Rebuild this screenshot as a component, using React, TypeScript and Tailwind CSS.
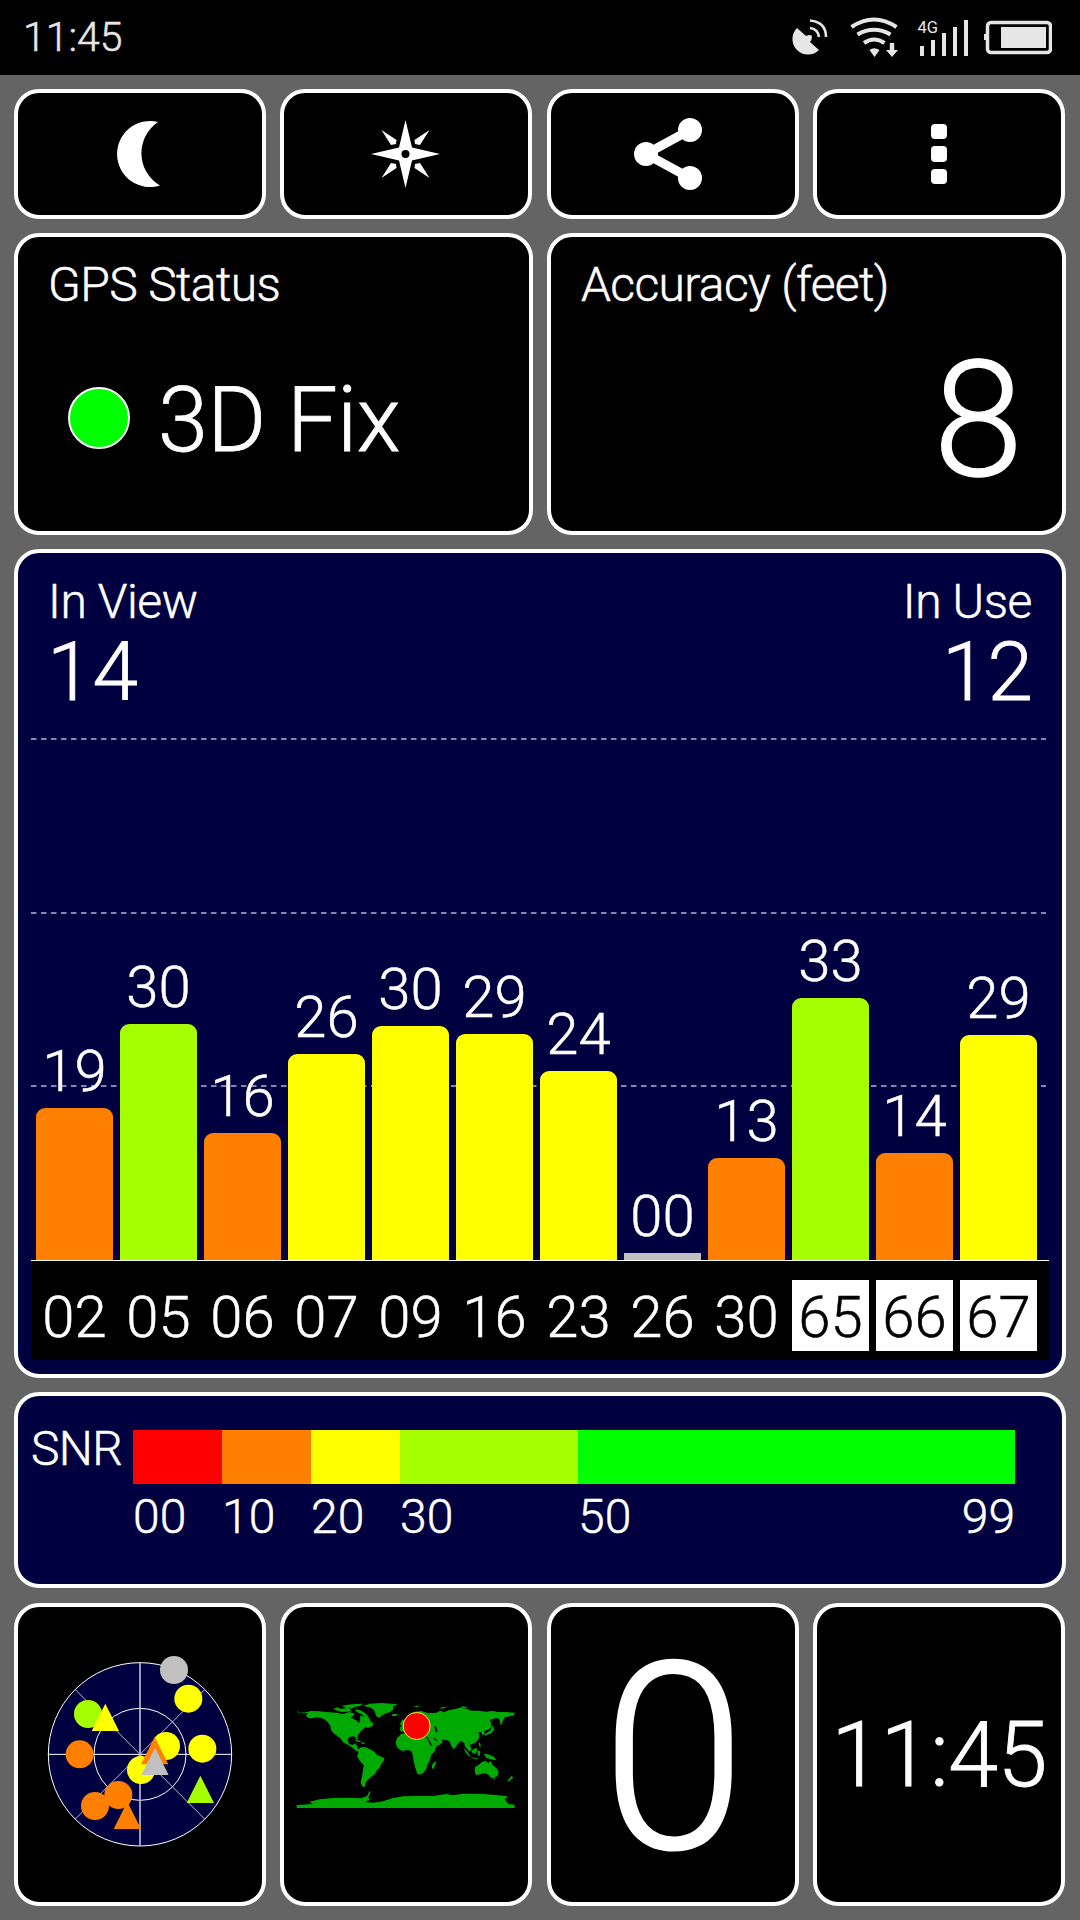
import { ReactNode } from 'react'

type Satellite = { id: string; snr: string; height: number; color: string; glonass?: boolean }

const SATELLITES: Satellite[] = [
  { id: '02', snr: '19', height: 152, color: '#ff8000' },
  { id: '05', snr: '30', height: 236, color: '#a6ff00' },
  { id: '06', snr: '16', height: 127, color: '#ff8000' },
  { id: '07', snr: '26', height: 206, color: '#ffff00' },
  { id: '09', snr: '30', height: 234, color: '#ffff00' },
  { id: '16', snr: '29', height: 226, color: '#ffff00' },
  { id: '23', snr: '24', height: 189, color: '#ffff00' },
  { id: '26', snr: '00', height: 7, color: '#c0c0c0' },
  { id: '30', snr: '13', height: 102, color: '#ff8000' },
  { id: '65', snr: '33', height: 262, color: '#a6ff00', glonass: true },
  { id: '66', snr: '14', height: 107, color: '#ff8000', glonass: true },
  { id: '67', snr: '29', height: 225, color: '#ffff00', glonass: true },
]

const SNR_STEPS = [
  { label: '00', className: 'w-[89px] bg-[#ff0000]', labelClass: 'w-[89px]' },
  { label: '10', className: 'w-[89px] bg-[#ff8000]', labelClass: 'w-[89px]' },
  { label: '20', className: 'w-[89px] bg-[#ffff00]', labelClass: 'w-[89px]' },
  { label: '30', className: 'w-[178px] bg-[#a6ff00]', labelClass: 'w-[178px]' },
  { label: '50', className: 'flex-1 bg-[#00ff00]', labelClass: 'flex-1' },
]

function Card({ className = '', children }: { className?: string; children: ReactNode }) {
  return (
    <div className={`rounded-[25px] border-4 border-white ${className}`}>
      {children}
    </div>
  )
}

function StatusBar() {
  return (
    <header className="flex h-[75px] items-center justify-between bg-black pl-[23px] pr-7 text-[#e6e6e6]">
      <span className="text-[41px] leading-none">11:45</span>
      <svg width="262" height="44" viewBox="790 16 262 44" fill="none">
        {/* 위성 안테나 */}
        <path d="M797 28 L806 36 Q810 34 812 36 Q812 40 810 42 L819 50 A15.5 15.5 0 0 1 797 28Z" fill="#e6e6e6" />
        <path d="M810 28 Q818 29 819 37 M810 20.5 Q826 22 826 37" stroke="#e6e6e6" strokeWidth="2.6" />
        {/* 와이파이 */}
        <path d="M851.500 27 Q874 12 896.500 27 M857.500 34.500 Q874 25 890.500 34.500 M864 43 Q874 36 884.500 43" stroke="#e6e6e6" strokeWidth="4" />
        <path d="M869.500 50 Q874 46.500 879.500 50 L874.500 57Z" fill="#e6e6e6" />
        <path d="M889.800 43h4.400v7h3.800l-6 7l-6-7h3.800z" fill="#e6e6e6" />
        {/* 신호 세기 */}
        <text x="917.500" y="33" fontSize="16.500" fontWeight="400" fill="#e6e6e6">4G</text>
        <path d="M922 46v10M933 40v16M944 33v23M955 27v29M966 20v36" stroke="#e6e6e6" strokeWidth="4" />
        {/* 배터리 */}
        <rect x="987.500" y="22.500" width="63" height="30" rx="3.500" stroke="#e6e6e6" strokeWidth="3.500" />
        <rect x="1001" y="27" width="45" height="21" fill="#e6e6e6" />
        <path d="M987 34h-3v6h3z" fill="#e6e6e6" />
      </svg>
    </header>
  )
}

function Toolbar() {
  return (
    <div className="flex h-[130px] gap-[14.5px] pr-px">
      <Card className="flex flex-1 items-center justify-center bg-black">
        <svg width="80" height="80" viewBox="0 0 80 80" fill="white">
          <path d="M58 8 A33 33 0 1 0 60 71.500 A37.500 37.500 0 0 1 58 8Z" />
        </svg>
      </Card>
      <Card className="flex flex-1 items-center justify-center bg-black">
        <svg width="80" height="80" viewBox="0 0 80 80" fill="white">
          <path d="M39.500 6 L46 33.500 L74 40 L46 46.500 L39.500 74 L33 46.500 L5 40 L33 33.500Z" />
          <path d="M15.500 16 L30.500 26 L30 30 L25 31Z M63.500 16 L48.500 26 L49 30 L54 31Z M15.500 64 L30.500 54 L30 50 L25 49Z M63.500 64 L48.500 54 L49 50 L54 49Z" />
          <circle cx="39.500" cy="40" r="4" fill="black" />
        </svg>
      </Card>
      <Card className="flex flex-1 items-center justify-center bg-black">
        <svg width="80" height="80" viewBox="0 0 80 80" fill="white">
          <path d="M57 16 L13 40 L57 64" fill="none" stroke="white" strokeWidth="9" />
          <circle cx="57" cy="16" r="12" />
          <circle cx="13" cy="40" r="12" />
          <circle cx="57" cy="64" r="12" />
        </svg>
      </Card>
      <Card className="flex flex-1 flex-col items-center justify-center gap-[7px] bg-black">
        <div className="h-[15.500px] w-[15.500px] rounded bg-white" />
        <div className="h-[15.500px] w-[15.500px] rounded bg-white" />
        <div className="h-[15.500px] w-[15.500px] rounded bg-white" />
      </Card>
    </div>
  )
}

function SignalChart() {
  return (
    <Card className="flex h-[829px] flex-col bg-[#000040] px-[13px]">
      <div className="flex h-[147px] justify-between px-[17px] pt-[21px]">
        <div>
          <p className="text-5xl leading-[56px] tracking-[-0.4px]">In View</p>
          <p className="-ml-px text-[82px] leading-[84px] [-webkit-text-stroke-width:0.8px]">14</p>
        </div>
        <div className="text-right">
          <p className="text-5xl leading-[56px] tracking-[-0.4px]">In Use</p>
          <p className="-mr-px text-[82px] leading-[84px] [-webkit-text-stroke-width:0.8px]">12</p>
        </div>
      </div>
      <div className="relative h-[560px]">
        <svg className="absolute inset-0" width="1018" height="560" viewBox="0 0 1018 560">
          <path d="M0 39h1015M0 213h1015M0 386h1015" stroke="#8585b5" strokeWidth="2" strokeDasharray="5.500 4.500" />
        </svg>
        <div className="relative flex h-full items-end gap-[7px] pl-[5px]">
          {SATELLITES.map((s) => (
            <div key={s.id} className="w-[77px]">
              <p className="mb-px whitespace-nowrap text-center text-[58px] leading-[72px]">{s.snr}</p>
              <div
                className={s.height > 10 ? 'rounded-t-[9px]' : ''}
                style={{ height: s.height, backgroundColor: s.color }}
              />
            </div>
          ))}
        </div>
      </div>
      <div className="flex h-[100px] gap-[7px] border-t border-white bg-black pl-[5px] pt-[19px]">
        {SATELLITES.map((s) => (
          <div
            key={s.id}
            className={`h-[71px] w-[77px] text-center text-[58px] leading-[75px] ${s.glonass ? 'bg-white text-black' : ''}`}
          >
            {s.id}
          </div>
        ))}
      </div>
    </Card>
  )
}

function SnrLegend() {
  return (
    <Card className="flex h-[196px] bg-[#000040] pl-[13px] pt-[34px]">
      <div className="w-[102px] text-5xl leading-[38px] tracking-[-0.7px]">SNR</div>
      <div className="w-[882px]">
        <div className="flex h-[54px]">
          {SNR_STEPS.map((step) => (
            <div key={step.label} className={step.className} />
          ))}
        </div>
        <div className="flex text-5xl leading-[66px]">
          {SNR_STEPS.map((step) => (
            <span key={step.label} className={step.labelClass}>{step.label}</span>
          ))}
          <span>99</span>
        </div>
      </div>
    </Card>
  )
}

function Radar() {
  return (
    <svg width="220" height="230" viewBox="0 0 660 690" className="shrink-0">
      <circle cx="330" cy="343" r="275" fill="#000040" />
      <g fill="none" stroke="#ffffff" strokeWidth="3">
        <circle cx="330" cy="343" r="275" />
        <circle cx="330" cy="343" r="138" />
        <path d="M55 343h550" />
        <path d="M330 68v550" stroke="#b8b8dc" strokeWidth="5" />
        <path d="M136 149L524 537M524 149L136 537" stroke="#b8b8dc" />
      </g>
      <g fill="#c0c0c0"><circle cx="432" cy="90" r="42" /></g>
      <g fill="#a6ff00">
        <circle cx="174" cy="222" r="42" />
        <path d="M511 407l41 82h-82z" />
      </g>
      <g fill="#ffff00">
        <circle cx="475" cy="176" r="42" />
        <circle cx="517" cy="326" r="42" />
        <circle cx="408" cy="318" r="42" />
        <circle cx="333" cy="390" r="42" />
        <path d="M226 191l41 82h-82z" />
      </g>
      <g fill="#ff8000">
        <circle cx="149" cy="343" r="42" />
        <circle cx="195" cy="498" r="42" />
        <circle cx="265" cy="465" r="42" />
        <path d="M292 485l41 82h-82z" />
        <path d="M374 291l41 82h-82z" />
      </g>
      <path d="M375 323l41 82h-82z" fill="#c0c0c0" />
    </svg>
  )
}

function WorldMap() {
  return (
    <svg width="230" height="130" viewBox="4 0 690 390" className="shrink-0">
      <g fill="#00aa00">
        {/* 북미 */}
        <path d="M21 60L26 68L40 70L55 70L48 77L56 84L68 85L78 82L92 83L104 88L114 96L122 107L124 120L132 130L144 139L152 145L160 157L175 164L185 171L196 179L205 185L210 180L203 174L202 165L193 161L190 165L178 162L174 150L178 142L190 139L197 141L201 149L205 147L203 138L210 128L216 121L228 111L235 114L250 107L244 96L238 84L230 72L222 80L212 76L211 94L207 99L202 92L190 86L184 82L196 72L180 66L160 72L140 68L110 66L88 64L65 63L50 67L30 68Z" />
        <path d="M130 57l14-5 10 5 20-4 12 8-10 4-22 1zM156 48l18-4 22-2 24-1-8 6-18 4-8 5-16-3zM196 58l15 2 14 8 10 12-6 3-14-11-14-6zM193 150l12 0 12 6-9 0zM214 157l12 1-2 4-8-1zM237 99l12-3 1 10-8 0z" />
        {/* 그린란드 */}
        <path d="M221 47L241 41L276 39L325 43L309 50L312 58L303 65L290 70L277 76L268 84L259 77L255 62L245 54ZM305 74l10-3 10 2-5 5-12 0z" />
        {/* 남미 */}
        <path d="M206 178L214 172L228 172L240 177L255 186L262 195L284 204L282 213L274 222L270 234L262 240L256 252L247 258L240 265L234 270L228 278L226 290L217 289L213 277L217 258L220 240L222 225L210 212L202 198L206 190Z" />
        {/* 유럽 / 아시아 */}
        <path d="M331 122L332 110L345 107L340 92L350 84L358 72L375 65L395 63L415 70L440 68L452 62L462 67L480 60L500 56L515 52L530 56L545 62L565 62L590 65L610 63L625 66L650 66L675 68L674 76L660 79L645 82L640 94L632 99L630 88L620 84L600 90L604 98L606 110L598 118L582 124L586 132L578 135L574 126L566 126L570 140L560 156L548 162L540 165L546 178L540 185L532 176L526 170L524 160L514 152L505 160L498 172L492 178L484 166L480 154L470 150L456 149L460 156L448 166L430 172L418 152L408 140L390 130L370 122L345 127Z" />
        <path d="M332 99l7-12 7 14-4 6-9 0zM448 55l13-4 14-1-17 6zM370 48l22-1-10 5zM512 47l15 3 12 2-17 2zM633 91l5 5-4 10-3-6zM610 105l4 14-10 11-18 7-2-3 18-13z" />
        {/* 아프리카 */}
        <path d="M334 132L358 126L372 127L386 135L412 135L420 150L428 166L440 168L436 182L424 196L420 214L413 224L410 236L400 250L388 254L382 250L376 230L372 214L370 198L366 184L356 180L336 183L322 172L318 158L322 145ZM438 213l1 7-7 17-5-2 0-10z" />
        {/* 인도네시아 / 오세아니아 */}
        <path d="M521 173l8 7 11 15 2 6-11-9zM545 182l13-8 6 3-6 14-9-1zM562 184l10-2-2 15-5 0zM540 202l17 1 12 3-15 0zM568 157l5 5-1 11-4-7zM582 191l13 2 18 7 7 11-19-4-11-3z" />
        <path d="M557 230L568 224L576 216L588 213L596 219L603 213L608 224L620 234L627 245L624 257L613 264L604 263L598 256L588 250L574 252L558 255L555 242ZM611 265l6 0-2 5zM666 257l5 6-13 11-5-1z" />
        {/* 남극 */}
        <path d="M21 345L70 342L60 335L90 328L130 324L180 323L215 325L232 318L240 302L242 308L236 322L240 330L225 336L250 338L280 334L310 324L340 319L385 318L430 318L470 312L490 316L520 311L580 312L620 315L655 319L645 328L656 342L675 344L675 354L21 354Z" />
      </g>
      {/* 카스피해 / 홍해 / 페르시아만 */}
      <path d="M434 108l6 2 4 16-6 1zM409 140l4 0 15 26-4 2zM432 143l12 8-2 3-9-6z" fill="#000000" />
      <circle cx="381" cy="108" r="40.500" fill="#ff0000" stroke="#ffe34d" strokeWidth="3" />
    </svg>
  )
}

export default function App() {
  return (
    <div
      className="flex h-[1920px] w-[1080px] flex-col overflow-hidden bg-[#646464] text-white font-light [-webkit-text-stroke-width:0.5px]"
      style={{ fontFamily: 'Roboto, "Liberation Sans", sans-serif' }}
    >
      <StatusBar />
      <main className="flex flex-col gap-3.5 px-3.5 pt-3.5">
        <Toolbar />

        <div className="flex h-[302px] gap-3.5">
          <Card className="flex-1 bg-black">
            <p className="pl-[30px] pt-5 text-5xl leading-[56px] tracking-[-0.6px]">GPS Status</p>
            <div className="flex items-center pl-[50px] pt-[52px]">
              <div className="h-[62px] w-[62px] rounded-full border-2 border-white bg-[#00ff00]" />
              <span className="ml-7 pt-[5px] text-[90px] leading-[101px] tracking-[-0.6px] [-webkit-text-stroke-width:0.8px]">3D Fix</span>
            </div>
          </Card>
          <Card className="flex-1 bg-black">
            <p className="pl-[30px] pt-5 text-5xl leading-[56px] tracking-[-0.65px]">Accuracy (feet)</p>
            <p className="pr-[39px] pt-3 text-right text-[162px] leading-[190px] [-webkit-text-stroke-width:1.3px]">8</p>
          </Card>
        </div>

        <SignalChart />
        <SnrLegend />

        <div className="mt-px flex h-[303px] gap-[14.5px] pr-px">
          <Card className="flex flex-1 items-center justify-center bg-black">
            <Radar />
          </Card>
          <Card className="flex flex-1 items-center justify-center bg-black">
            <WorldMap />
          </Card>
          <Card className="flex flex-1 items-center justify-center bg-black">
            <span className="pl-0.5 pt-2 text-[261px] leading-[280px] [-webkit-text-stroke-width:2px]">0</span>
          </Card>
          <Card className="flex flex-1 items-center justify-center bg-black">
            <span className="pt-[3px] text-[90px] leading-none tracking-[-0.6px] [-webkit-text-stroke-width:0.8px]">11:45</span>
          </Card>
        </div>
      </main>
    </div>
  )
}
